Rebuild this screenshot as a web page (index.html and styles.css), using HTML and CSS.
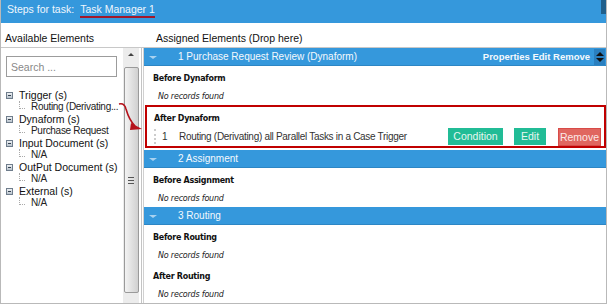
FILE: index.html
```html
<!doctype html>
<html lang="en">
  <head>
    <meta charset="UTF-8" />
    <title>Steps for task</title>
    <link rel="stylesheet" href="styles.css">
  </head>
  <body>
    <div class="window">
      <header class="titlebar">
        <span>Steps for task:</span>
        <span class="task-name">Task Manager 1</span>
        <span class="close-btn"></span>
      </header>
      <div class="labels">
        <div class="label-left">Available Elements</div>
        <div class="label-right">Assigned Elements (Drop here)</div>
      </div>
      <div class="main">
        <aside class="available">
          <div class="tree-area">
            <input class="search" type="text" placeholder="Search ..." />
            <ul class="tree">
              <li class="node"><span class="minus"></span>Trigger (s)</li>
              <li class="leaf">Routing (Derivating...</li>
              <li class="node"><span class="minus"></span>Dynaform (s)</li>
              <li class="leaf">Purchase Request</li>
              <li class="node"><span class="minus"></span>Input Document (s)</li>
              <li class="leaf">N/A</li>
              <li class="node"><span class="minus"></span>OutPut Document (s)</li>
              <li class="leaf">N/A</li>
              <li class="node"><span class="minus"></span>External (s)</li>
              <li class="leaf">N/A</li>
            </ul>
          </div>
          <div class="scrollbar">
            <div class="scroll-up"></div>
            <div class="thumb"><span class="grip"></span></div>
          </div>
        </aside>
        <section class="assigned">
          <div class="step">
            <div class="step-head">
              <span class="caret"></span>
              <span class="step-title">1 Purchase Request Review (Dynaform)</span>
              <span class="step-actions">Properties Edit Remove</span>
              <span class="sorter"></span>
            </div>
            <div class="group">
              <div class="group-title">Before Dynaform</div>
              <div class="empty">No records found</div>
            </div>
            <div class="group highlight">
              <div class="group-title">After Dynaform</div>
              <div class="trigger-row">
                <span class="handle"></span>
                <span class="num">1</span>
                <span class="trigger-name">Routing (Derivating) all Parallel Tasks in a Case Trigger</span>
                <button class="btn btn-green btn-cond">Condition</button>
                <button class="btn btn-green btn-edit">Edit</button>
                <button class="btn btn-red">Remove</button>
              </div>
            </div>
          </div>
          <div class="step">
            <div class="step-head">
              <span class="caret"></span>
              <span class="step-title">2 Assignment</span>
            </div>
            <div class="group">
              <div class="group-title">Before Assignment</div>
              <div class="empty">No records found</div>
            </div>
          </div>
          <div class="step">
            <div class="step-head">
              <span class="caret"></span>
              <span class="step-title">3 Routing</span>
            </div>
            <div class="group">
              <div class="group-title">Before Routing</div>
              <div class="empty">No records found</div>
            </div>
            <div class="group">
              <div class="group-title">After Routing</div>
              <div class="empty">No records found</div>
            </div>
          </div>
        </section>
      </div>
      <svg class="drag-arrow" width="30" height="34" viewBox="0 0 30 34">
        <path d="M1 4 C5 3 7 5 8 9 C10 16 12 21 17 26" stroke="#b5121b" stroke-width="1.6" fill="none" />
        <path d="M13 23 L24 29 L12 30 Z" fill="#b5121b" />
      </svg>
    </div>
  </body>
</html>
```

FILE: styles.css
```css
body {
  margin: 0;
  font-family: "Liberation Sans", Arial, sans-serif;
  color: #222;
  background: #fff;
}
.window {
  position: relative;
  width: 607px;
  height: 304px;
  box-sizing: border-box;
  border: 1px solid #b9b9b9;
  border-top: none;
  overflow: hidden;
}
.titlebar {
  height: 23px;
  background-color: #3598dc;
  color: #eef6fc;
  font-size: 10.5px;
  display: flex;
  align-items: flex-start;
  padding: 3px 0 0 6px;
  box-sizing: border-box;
  gap: 4px;
  position: relative;
}
.task-name {
  border-bottom: 2px solid #a3182a;
  padding: 0 0 1px 0;
  margin-left: 2px;
}
.close-btn {
  position: absolute;
  right: -1px;
  top: 0;
  width: 6px;
  height: 14px;
  background: #1f5f8c;
}
.labels {
  display: flex;
  height: 25px;
  padding-top: 9px;
  box-sizing: border-box;
  font-size: 10.5px;
  color: #111;
  border-bottom: 1px solid #c8c8c8;
}
.label-left {
  width: 155px;
  padding-left: 4px;
  box-sizing: border-box;
}
.main {
  display: flex;
  height: 255px;
}
.available {
  width: 141px;
  display: flex;
  border-right: 1px solid #c4c4c4;
  box-sizing: border-box;
}
.tree-area {
  flex: 1;
  padding: 8px 0 0 5px;
  min-width: 0;
  overflow: hidden;
}
.search {
  display: block;
  width: 111px;
  height: 21px;
  box-sizing: border-box;
  border: 1px solid #9c9c9c;
  font-family: "Liberation Sans", Arial, sans-serif;
  font-size: 10.5px;
  padding: 2px 4px;
  margin-bottom: 12px;
}
.search::placeholder {
  color: #888;
}
.tree {
  list-style: none;
  margin: 0;
  padding: 0;
  font-size: 10.5px;
  line-height: 12px;
  white-space: nowrap;
}
.node {
  display: flex;
  align-items: center;
  color: #111;
}
.minus {
  width: 7px;
  height: 7px;
  border: 1px solid #6f7d8c;
  background: linear-gradient(#eef1f4, #b8c2cc);
  margin-right: 6px;
  position: relative;
  box-sizing: border-box;
}
.minus::after {
  content: "";
  position: absolute;
  left: 1px;
  top: 2px;
  width: 3px;
  height: 1px;
  background: #34414f;
}
.leaf {
  position: relative;
  padding-left: 25px;
  font-size: 10px;
  letter-spacing: -0.3px;
  color: #222;
}
.leaf::before {
  content: "";
  position: absolute;
  left: 13px;
  top: 0;
  width: 5px;
  height: 7px;
  border-left: 1px dotted #aaa;
  border-bottom: 1px dotted #aaa;
}
.scrollbar {
  width: 16px;
  margin-right: 2px;
  background: #ececec;
  display: flex;
  flex-direction: column;
  align-items: center;
}
.scroll-up {
  width: 0;
  height: 0;
  margin: 5px 0 11px;
  border-left: 3px solid transparent;
  border-right: 3px solid transparent;
  border-bottom: 3px solid #444;
}
.thumb {
  width: 15px;
  flex: 1;
  margin-bottom: 10px;
  border: 1px solid #9a9a9a;
  border-radius: 2px;
  background: linear-gradient(to right, #f3f3f3, #d0d0d0);
  box-sizing: border-box;
  display: flex;
  justify-content: center;
  align-items: center;
}
.grip {
  width: 6px;
  height: 5px;
  border-top: 1px solid #555;
  border-bottom: 1px solid #555;
  position: relative;
}
.grip::after {
  content: "";
  position: absolute;
  left: 0;
  right: 0;
  top: 2px;
  height: 1px;
  background: #555;
}
.assigned {
  flex: 1;
  border-left: 1px solid #d0d0d0;
  margin-left: 1px;
  min-width: 0;
}
.step-head {
  height: 18px;
  background-color: #3598dc;
  border-bottom: 1px solid #2d86c4;
  box-sizing: border-box;
  color: #f4f9fd;
  font-size: 10px;
  display: flex;
  align-items: center;
}
.caret {
  width: 0;
  height: 0;
  margin: 2px 21px 0 5px;
  border-left: 4px solid transparent;
  border-right: 4px solid transparent;
  border-top: 3px solid #a9d2f0;
}
.step-title {
  flex: 1;
  white-space: nowrap;
}
.step-actions {
  font-weight: bold;
  font-size: 9.5px;
  margin-right: 4px;
  white-space: nowrap;
}
.sorter {
  width: 11px;
  height: 16px;
  flex: none;
  background: #2a7fbf;
  margin-right: 1px;
  position: relative;
}
.sorter::before,
.sorter::after {
  content: "";
  position: absolute;
  left: 2px;
  border-left: 4px solid transparent;
  border-right: 4px solid transparent;
}
.sorter::before {
  top: 3px;
  border-bottom: 4px solid #111;
}
.sorter::after {
  bottom: 3px;
  border-top: 4px solid #111;
}
.group {
  padding: 5px 0 0 9px;
}
.group-title {
  font-family: "DejaVu Sans", sans-serif;
  font-weight: bold;
  font-size: 8px;
  letter-spacing: -0.3px;
  color: #111;
  height: 15px;
  line-height: 15px;
}
.empty {
  font-family: "DejaVu Sans", sans-serif;
  font-style: italic;
  font-size: 8px;
  letter-spacing: -0.2px;
  color: #222;
  padding-left: 5px;
  height: 19px;
  line-height: 22px;
}
.highlight {
  border: 2px solid #c00000;
  margin: 0 0 2px 1px;
  padding: 4px 3px 0 7px;
}
.trigger-row {
  display: flex;
  align-items: center;
  height: 20px;
  font-size: 10px;
  letter-spacing: -0.3px;
  color: #333;
}
.handle {
  width: 1px;
  height: 15px;
  border-left: 2px dotted #ccc;
  margin-right: 5px;
}
.num {
  width: 17px;
}
.trigger-name {
  flex: 1;
  white-space: nowrap;
}
.btn {
  border: none;
  color: #e7f7f1;
  font-family: "Liberation Sans", Arial, sans-serif;
  font-size: 10.5px;
  letter-spacing: 0;
  height: 17px;
  padding: 0;
  cursor: pointer;
}
.btn-green {
  background-color: #21bc96;
}
.btn-cond {
  width: 55px;
  margin-right: 11px;
}
.btn-edit {
  width: 32px;
  margin-right: 12px;
}
.btn-red {
  background-color: #e0665f;
  border: 1px solid #d84b48;
  color: #fbe9e8;
  width: 43px;
  height: 18px;
  margin-top: 2px;
}
.drag-arrow {
  position: absolute;
  left: 117px;
  top: 100px;
}
```
